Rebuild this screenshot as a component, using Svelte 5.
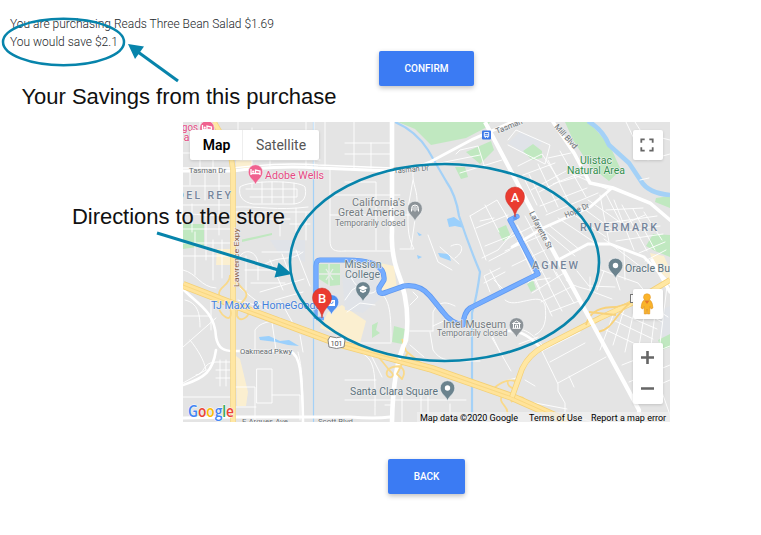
<script>
  // Minor streets, drawn as thin white lines.
  const streets = [
    // north-west
    'M183 140H232M183 153H228M200 122V168M213 140V168M183 186H230M190 170V185M205 170V200M219 171V235M183 205H230M183 215C195 212 205 218 230 214M183 229H230M192 204V232M206 214V260M183 243H232M183 256H231M195 232V275M213 240V280M222 240V278',
    'M240 187C247 180 300 180 305 187C308 200 300 204 292 204H253C243 202 238 197 240 187M246 189H297V197H250M252 183V188M262 182V203M272 182V203M283 182V203M294 183V204',
    'M235 212H310M235 207C260 206 276 211 308 207M314 122V165M299 170V178M330 170V215H420M330 195H400M345 182H376V224M354 122V168M371 143V168M345 143H391M306 122V168',
    'M238 122V160M252 128V166M270 160V166M240 160H320M325 122V166M240 219H290M262 212V222M280 212V236M296 208V236M306 212V240M290 224H310M330 215V240C330 250 334 252 345 251',
    // west, around the expressway
    'M240 256C245 248 258 251 258 265V280M246 256V290M262 252H300M265 264C280 255 290 262 303 252M270 260L283 290M282 254L296 291M296 250L310 286M245 270H273M251 283H285M260 292L304 279M275 300L303 292M240 288L268 310M238 300L258 306',
    'M183 270C197 273 200 287 216 288M185 300C198 303 200 314 200 327M183 316H210M190 340C198 350 204 360 206 370M196 375C205 375 202 362 216 362H232M183 397H232M220 360V386M226 360V386M216 370H232M216 378H232M211 300V330M183 347L216 318M183 383L206 370',
    'M257 369H272V403H257ZM235 387H255V420M235 407H256M272 395H300V420M298 352C300 361 303 368 303 418M255 351V330C261 321 270 323 280 318M272 322L276 350M300 335L303 352M280 300L295 327',
    // centre
    'M345 251H393M376 224V250M400 249H414C407 236 408 225 408 208L413 180M345 154H392M413 172C412 185 418 190 417 205L411 248M428 235L438 262L452 270M440 247L459 264M451 246C463 240 466 251 455 258M456 154L460 150L478 146L485 168M460 173L502 160M430 165L480 155',
    'M470 216L497 200L515 230L498 250L482 258M470 216L486 260M485 205L499 232M476 228L508 215M489 261L510 250M485 246L510 236M490 270L502 292M494 218L480 221',
    'M380 292C390 300 391 313 391 342M391 343H353M410 331H433M410 345L424 357M430 332L433 350C440 361 449 359 450 361H480M433 331V312C439 300 447 302 455 306M410 305L418 297L413 292M492 338L511 371M450 318L433 326M470 327H488L500 352M357 351C377 358 375 372 375 415M345 380H376M345 400H466M402 397V422M428 397V422M450 404V422M369 351L382 377M421 390V420M385 405H392',
    'M484 283L505 272M490 292L484 276L500 268M494 280L504 290M345 300L352 290L362 284M350 275C356 290 372 300 378 288M347 312L360 303L375 305',
    // north-east
    'M508 140L516 130L550 145L545 164L508 145M518 166L542 154L560 181L539 192M523 175L555 163M531 190L566 171M523 176L537 205M529 174L547 212M538 164L558 207M548 160L569 202M560 151L586 197M540 206L587 188M546 215L598 193M553 184L583 172M570 173L609 190M548 158L571 153M560 182L600 170',
    'M505 240L535 225M505 251L540 236M512 266L545 250M528 283L550 263M517 225L550 286M525 216L558 278M505 213L540 289M544 230L575 256M550 226L580 250M558 218L597 244M570 212L606 237M580 206L613 230M588 200L624 225',
    'M600 195L609 242M606 194L622 225L645 215M614 200L634 250M622 205L647 251M633 209L655 250M644 212L662 240M606 210L643 208M607 223L657 216M608 232L660 226M616 241L663 234M604 239L645 270M639 253L665 242M645 261L666 250M624 250L625 280',
    'M635 122L642 133L670 140M626 122L637 145M648 160L670 154M640 180L649 178',
    // south-east
    'M524 282L550 278M532 293L564 273M541 302L571 287M550 312L579 301M535 281L552 316M545 278L562 311M556 272L574 303M505 300C515 310 540 290 545 305C547 320 545 330 535 335M512 333C520 325 530 331 542 345M519 344L538 337',
    'M566 280C575 289 590 288 596 293L612 299M577 271L589 286L615 287M590 277V290M604 271L597 290M601 270L638 283L651 299M610 260L620 290',
    'M604 329L648 350M613 320L653 339M620 313L657 329M632 305L662 322M642 300L668 317M615 310L600 350M626 303L613 345M637 297L625 352M648 293L637 358M658 290L649 362M667 286L658 360M622 365L670 346M629 382L670 365M635 395L670 380M650 358L670 415',
    'M542 351L558 384V391L565 403V422M542 351L580 332M550 362L585 343M558 383L606 357M569 376L574 387M505 381L520 377M525 380L535 386M530 402L567 409M568 413L592 422',
  ];

  const places = [
    { t: "California's", x: 352, y: 206, w: 53, s: 10.7, c: '#747b80' },
    { t: 'Great America', x: 338, y: 216, w: 67, s: 10.7, c: '#747b80' },
    { t: 'Temporarily closed', x: 335, y: 225.5, w: 70.5, s: 8.6, c: '#747b80' },
    { t: 'Mission', x: 344.5, y: 267.5, w: 37, s: 10.7, c: '#647984' },
    { t: 'College', x: 345, y: 278, w: 35, s: 10.7, c: '#647984' },
    { t: 'Intel Museum', x: 443, y: 328, w: 63, s: 10.7, c: '#747b80' },
    { t: 'Temporarily closed', x: 437, y: 336, w: 70.5, s: 8.6, c: '#747b80' },
    { t: 'Santa Clara Square', x: 350, y: 395, w: 88, s: 10.7, c: '#5b717c' },
    { t: 'Oracle Bu', x: 625, y: 272, w: 45, s: 10.7, c: '#5b717c' },
    { t: 'Adobe Wells', x: 265, y: 179, w: 59, s: 11, c: '#e54983' },
    { t: 'gos', x: 182, y: 130.5, w: 16, s: 10.5, c: '#e54983' },
    { t: 'a', x: 183.5, y: 140.5, w: 6, s: 10.5, c: '#e54983' },
    { t: 'TJ Maxx & HomeGoods', x: 211, y: 309, w: 110, s: 11, c: '#427fdc' },
    { t: 'Ulistac', x: 580, y: 163.5, w: 32, s: 10.7, c: '#31904d' },
    { t: 'Natural Area', x: 567, y: 174, w: 58, s: 10.7, c: '#31904d' },
    { t: 'DEL REY', x: 177, y: 198.5, w: 54, s: 10.5, c: '#75859b' },
    { t: 'RIVERMARK', x: 580, y: 231, w: 77, s: 10.8, c: '#75859b' },
    { t: 'AGNEW', x: 532, y: 269, w: 46, s: 10.8, c: '#75859b' },
  ];

  const roadNames = [
    { t: 'Tasman Dr', x: 189, y: 173, w: 37, r: 0 },
    { t: 'Tasman Dr', x: 394, y: 173.5, w: 35, r: -5 },
    { t: 'Tasman', x: 497, y: 134, w: 28, r: -22 },
    { t: 'Mill Blvd', x: 554, y: 127, w: 30, r: 48 },
    { t: 'Hope Dr', x: 566, y: 218, w: 26, r: -24 },
    { t: 'Lafayette St', x: 529, y: 213, w: 41, r: 63 },
    { t: 'Lawrence Expy', x: 238.5, y: 287, w: 59, r: -90, c: '#8a5a3c' },
    { t: 'Oakmead Pkwy', x: 240, y: 354, w: 52, r: 0 },
    { t: 'E Arques Ave', x: 242, y: 424, w: 46, r: 0 },
    { t: 'Scott Blvd', x: 318, y: 424, w: 35, r: 0 },
  ];

  const pins = [
    { x: 415, y: 221.5, c: '#8c9398', kind: 'park' },
    { x: 363, y: 302, c: '#6b838e', kind: 'school' },
    { x: 516.5, y: 338, c: '#8c9398', kind: 'museum' },
    { x: 447.5, y: 401, c: '#6b838e', kind: 'dot' },
    { x: 615.5, y: 278.5, c: '#6b838e', kind: 'dot' },
    { x: 255.5, y: 185, c: '#f0628f', kind: 'bed' },
    { x: 207, y: 141, c: '#f0628f', kind: 'bed' },
    { x: 331.5, y: 315, c: '#4f8ff0', kind: 'bag' },
  ];

  const route = 'M517 216.5L510 220L538 274L470 308Q464 312 463 325Q451 323 443 312L430 296Q420 284 404 286L387 292Q378 296 379 288L384 280Q385 269 374 264Q364 260 345 260H320Q316 260 316 266V298';

  const google = [
    ['G', '#4285f4'], ['o', '#ea4335'], ['o', '#fbbc04'],
    ['g', '#4285f4'], ['l', '#34a853'], ['e', '#ea4335'],
  ];
</script>

<main>
  <div class="summary">
    <p>You are purchasing Reads Three Bean Salad $1.69</p>
    <p>You would save $2.1</p>
  </div>

  <button class="confirm">CONFIRM</button>

  <div class="map">
    <svg class="tiles" viewBox="183 122 487 300" width="487" height="300">
      <rect x="183" y="122" width="487" height="300" fill="#e4e4e4" />

      <g fill="#fbefd0">
        <path d="M216 265H232V249H217ZM236 160H252V168H236ZM236 356L240 359L248 392L246 406H237ZM328 312L342 305L366 321L360 343L320 328ZM380 263L394 266L397 289L382 294ZM650 253L664 256L670 270V280L655 269Z" />
      </g>
      <g fill="#e0e3e8">
        <path d="M270 240H305V262L278 252ZM342 275L375 270L380 299L363 313L345 310ZM508 143L520 132L542 142L532 158ZM661 310L670 306V345L660 335Z" />
      </g>
      <g fill="#c0e8c0">
        <path d="M398 122H490L487 127L466 138L431 145L415 129ZM466 152L491 141L494 150L480 164ZM455 167L465 167L468 177L461 179ZM565 122H589L610 146L621 170L609 181L590 166L573 140ZM523 151L533 144L542 151V158L532 160ZM656 198L670 196V208L655 202ZM646 246L653 234L670 235V257L655 251ZM183 224H204V246L183 249ZM319 264H340V285L330 286L319 279ZM394 326L405 329L402 344L392 342ZM372 325L378 322L376 330L380 333L372 338ZM527 284L533 280L536 289L531 292ZM658 340L670 334V347L662 350ZM497 229L506 225L511 237L503 241Z" />
        <path d="M242 239.500L272 233V235L242 242Z" />
      </g>
      <path d="M319 274H340M329 264V286M326 269L333 280M333 269L326 280" fill="none" stroke="#e8ede8" stroke-width="1.300" />
      <g fill="#9bd0fc">
        <path d="M447 219L454 217L461 222L464 228L455 226L449 227ZM417 232L422 235L419 236ZM438 253L449 254L451 261L440 257ZM417 255L422 257L418 259ZM259 337L269 336L280 341L289 340L299 346L288 345L276 342L260 340Z" />
      </g>
      <g fill="none" stroke="#a4d1f7">
        <path d="M395 122Q416 131 428 150L446 181Q456 195 459 216Q469 246 480 272Q477 296 472 313V422" stroke-width="2.2" />
        <path d="M588 121Q603 130 609 145L629 163L641 181Q648 193 670 195" stroke-width="4.600" />
        <path d="M313.500 122V422" stroke-width="1.2" />
      </g>

      <g fill="none" stroke="#fff" stroke-linecap="round">
        {#each streets as d}
          <path {d} stroke-width="1" stroke-opacity=".9" />
        {/each}
        <path d="M183 171H233Q282 165 318 168L392 171Q412 170 430 162L473 139L512 122" stroke-width="3" />
        <path d="M183 168H233Q282 162 318 165L392 168" stroke-width="1.3" />
        <path d="M392 122V232Q391 252 397 270Q411 304 406 340Q393 367 392 422" stroke-width="4.6" />
        <path d="M553 122L574 153L590 183L613 188L650 203L670 220" stroke-width="3.600" />
        <path d="M612 188L590 207L543 228L512 247M558 260L588 244L610 244L644 257L670 284" stroke-width="2.800" />
        <path d="M183 289C196 303 215 311 216 337C218 349 225 351 233 351H290C300 355 302 370 303 422M216 350C213 371 205 378 183 385" stroke-width="2.600" />
        <path d="M183 418L232 417L350 417Q375 419 390 417M505 331Q526 329 542 350" stroke-width="2.800" />
        <path d="M652 260L670 292" stroke-width="3.5" />
      </g>

      <g fill="none" stroke-linejoin="round">
        <path d="M214 122L230 150L233 170V422" stroke="#f5d684" stroke-width="5.600" />
        <path d="M214 122L230 150L233 170V422" stroke="#ffe7a3" stroke-width="4" />
        <g stroke="#f9d98a" stroke-width="1.800">
          <path d="M230 275C230 286 219 286 219 294C220 303 230 300 231 313C231 323 222 316 219 309M236 278C238 289 249 290 246 297C242 305 236 304 237 316C240 322 247 319 250 311" />
          <path d="M377 355L390 371C397 376 389 380 387 375C385 368 394 366 402 366M402 339L406 351L423 365M408 352L397 374L402 379C407 370 401 366 398 367" />
          <path d="M493 389C505 378 518 378 517 386C516 392 506 386 508 381M511 402C516 397 525 393 527 406M503 393C496 405 510 405 507 414" />
        </g>
        <path d="M183 285L240 307L340 344L432 369L512 397L566 421" stroke="#f4d075" stroke-width="8" />
        <path d="M183 285L240 307L340 344L432 369L512 397L566 421" stroke="#ffe39a" stroke-width="6.400" />
        <path d="M183 285L240 307L340 344L432 369L512 397L566 421" stroke="#f6d37a" stroke-width=".8" />
        <path d="M512 397L522 369Q529 354 545 346L600 318L630 304L670 280" stroke="#f4d075" stroke-width="5.600" />
        <path d="M512 397L522 369Q529 354 545 346L600 318L630 304L670 280" stroke="#ffe7a3" stroke-width="4.2" />
        <path d="M586 325C590 310 602 307 616 307L630 303C614 316 613 329 598 332M589 312L616 315" stroke="#f8d27a" stroke-width="1.800" />
      </g>
      <path d="M485 122L558 260L639 410V422" stroke="#fff" stroke-width="4.200" fill="none" />
      <path d="M406 337Q404 349 399 359" stroke="#fff" stroke-width="3.600" fill="none" />

      <g class="roads">
        {#each roadNames as n}
          <text x={n.x} y={n.y} fill={n.c ?? '#666c70'} textLength={n.w} lengthAdjust="spacingAndGlyphs" transform="rotate({n.r} {n.x} {n.y})">{n.t}</text>
        {/each}
      </g>

      <path d={route} fill="none" stroke="#5f98f0" stroke-width="5.200" stroke-linejoin="round" stroke-linecap="round" />
      <path d={route} fill="none" stroke="#75adff" stroke-width="3.800" stroke-linejoin="round" stroke-linecap="round" />
      <path d="M316 298V319M316 318.500H324" fill="none" stroke="#73a9f5" stroke-width="3.600" />
      <circle cx="515" cy="218" r="2" fill="#5f98f0" />

      <g class="places">
        {#each places as p}
          <text x={p.x} y={p.y} font-size={p.s} fill={p.c} textLength={p.w} lengthAdjust={p.c === '#75859b' ? 'spacing' : 'spacingAndGlyphs'} class:area={p.c === '#75859b'}>{p.t}</text>
        {/each}
      </g>

      {#each pins as p}
        <g transform="translate({p.x} {p.y})">
          <path d="M0 0C-1-5-7.300-7-7.300-13A7.300 7.300 0 0 1 7.300-13C7.300-7 1-5 0 0Z" fill={p.c} stroke="#f2f4f5" stroke-width=".6" />
          {#if p.kind === 'dot'}
            <circle cy="-13" r="2.7" fill="#fff" />
          {:else if p.kind === 'school'}
            <path d="M-4.8-14L0-16.5L4.8-14L0-11.5ZM-3-12.4L0-10.8L3-12.4V-10.4L0-9L-3-10.4Z" fill="#fff" />
          {:else if p.kind === 'museum'}
            <path d="M-4-14.5L0-17L4-14.5ZM-3-14V-10M3-14V-10M-4-9.7H4M-1-10V-13H1V-10" fill="none" stroke="#fff" />
          {:else if p.kind === 'park'}
            <path d="M-3.5-10V-13A3.5 3.5 0 0 1 3.5-13V-10M0-16V-10M-2-15V-11M2-15V-11" fill="none" stroke="#fff" />
          {:else if p.kind === 'bed'}
            <path d="M-4.5-16V-10M-4.5-11.5H4.5V-10M4.5-12V-14L0-15V-12" fill="none" stroke="#fff" stroke-width="1.3" /><circle cx="-2.3" cy="-13.4" r="1.1" fill="#fff" />
          {:else}
            <path d="M-3.500-15H3.500V-9H-3.500Z" fill="#fff" /><path d="M-1.600-13.500A1.600 2 0 0 0 1.600-13.500" fill="none" stroke="#4f8ff0" />
          {/if}
        </g>
      {/each}

      <g fill="#3b78e7">
        <rect x="482" y="130.500" width="9" height="9" rx="1" />
        <path d="M484.300 132.500H488.700V136.500H484.300ZM484.300 134.800H488.700M485 138L485.600 137M488 138L487.400 137" fill="none" stroke="#fff" stroke-width=".9" />
      </g>
      <g>
        <path d="M330 336.500Q336.500 339 343 336.500L345 340L344 347Q336.500 350 329 347L328 340Z" fill="#fff" stroke="#777" stroke-width=".9" />
        <text x="330.500" y="345.500" font-size="7.500" fill="#555" textLength="12">101</text>
      </g>
      <rect x="630.500" y="294.500" width="6" height="8" fill="#fff" stroke="#777" />

      {#each [['A', 515, 217], ['B', 322, 318]] as [name, x, y]}
        <g transform="translate({x} {y})">
          <path d="M0 0C-1-10-9.500-12-9.500-20.500A9.500 9.500 0 0 1 9.500-20.500C9.500-12 1-10 0 0Z" fill="#ea3b30" stroke="#c5352c" stroke-width=".5" />
          <text y="-15.500" class="marker">{name}</text>
        </g>
      {/each}
    </svg>

    <div class="types"><b>Map</b><span>Satellite</span></div>
    <div class="tool full">
      <svg viewBox="0 0 14 14" width="14" height="14"><path d="M1.300 4.700V1.300H4.700M9.300 1.300H12.700V4.700M12.700 9.300V12.700H9.300M4.700 12.700H1.300V9.300" fill="none" stroke="#666" stroke-width="1.800" /></svg>
    </div>
    <div class="tool man">
      <svg viewBox="0 0 14 22" width="14" height="22">
        <path d="M3.500 7.500H10.500Q12.500 9 13 15L11 16L10 13.500L9.700 21H7.400L7 16L6.600 21H4.300L4 13.500L3 16L1 15Q1.500 9 3.500 7.500Z" fill="#f9b32a" stroke="#d98a1c" stroke-width=".5" />
        <path d="M4.500 7.500H9.500L7 11Z" fill="#e5762b" />
        <circle cx="7" cy="4.200" r="3.500" fill="#fbb42b" stroke="#e09524" stroke-width=".5" />
      </svg>
    </div>
    <div class="tool zoomer">
      <svg viewBox="0 0 30 61" width="30" height="61"><path d="M8 14.500H21M14.500 8V21M8 45.500H21" fill="none" stroke="#666" stroke-width="2.600" /></svg>
    </div>
    <svg class="google" viewBox="0 0 50 20" width="50" height="20">
      <text x="1" y="14" textLength="46" lengthAdjust="spacingAndGlyphs">{#each google as [ch, fill]}<tspan {fill}>{ch}</tspan>{/each}</text>
    </svg>
    <div class="legal"><span class="data">Map data ©2020 Google</span><span class="terms">Terms of Use</span><span class="report">Report a map error</span></div>
  </div>

  <button class="back">BACK</button>

  <svg class="notes" viewBox="0 0 761 535" width="761" height="535">
    <g fill="none" stroke="#0784ab">
      <ellipse cx="63.500" cy="42" rx="60.500" ry="23.200" stroke-width="2.500" />
      <ellipse cx="444.500" cy="262.500" rx="154.500" ry="98.500" stroke-width="2.600" />
      <path d="M178 81L138 52" stroke-width="3" />
      <path d="M157 233L280 270.500" stroke-width="3" />
    </g>
    <g fill="#0784ab">
      <path d="M128 44L144 46.500L135 59Z" />
      <path d="M292 274L278.500 262.500L274.500 277.500Z" />
    </g>
    <text x="21.500" y="104" textLength="315">Your Savings from this purchase</text>
    <text x="72" y="224" textLength="213">Directions to the store</text>
  </svg>
</main>

<style>
  :global(body) { background: #fff; }
  main {
    position: relative;
    box-sizing: border-box;
    width: 761px;
    height: 535px;
    overflow: hidden;
    padding-top: 15px;
    display: flex;
    flex-direction: column;
    font-family: Roboto, sans-serif;
    color: #212529;
  }
  .summary { padding-left: 10px; height: 36px; }
  p { margin: 0; font-size: 12px; font-weight: 300; line-height: 18px; }
  button {
    border: 0;
    padding: 0;
    height: 35px;
    border-radius: 2px;
    background: #3b7bf3;
    color: #fff;
    font: 500 10px Roboto, sans-serif;
    box-shadow: 0 2px 5px rgba(0, 0, 0, 0.25);
  }
  .confirm { width: 95px; margin-left: 379px; }
  .back { width: 77px; margin: 37px 0 0 388px; }
  .map { position: relative; width: 487px; height: 300px; margin: 36px 0 0 183px; }
  .tiles { display: block; }
  .tiles text { font-family: Roboto, sans-serif; }
  .places text { stroke: #f1f1f1; stroke-width: 1.2px; paint-order: stroke; stroke-linejoin: round; font-weight: 400; }
  .places .area { font-weight: 500; }
  .roads text { font-size: 8px; stroke: #f1f1f1; stroke-width: 1px; paint-order: stroke; }
  .tiles .marker { fill: #fff; font-size: 13px; font-weight: 500; text-anchor: middle; }
  .types {
    position: absolute;
    left: 7px;
    top: 8px;
    display: flex;
    height: 30px;
    width: 129px;
    line-height: 30px;
    font-size: 14px;
    background: #fff;
    border-radius: 2px;
    box-shadow: 0 1px 3px rgba(0, 0, 0, 0.15);
    color: #565656;
    text-align: center;
  }
  .types b { width: 53px; font-weight: 600; color: #000; border-right: 1px solid #eee; box-sizing: border-box; padding-left: 1px; }
  .types span { width: 76px; }
  .tool {
    position: absolute;
    left: 450px;
    width: 30px;
    height: 30px;
    display: flex;
    align-items: center;
    justify-content: center;
    background: #fff;
    border-radius: 2px;
    box-shadow: 0 1px 3px rgba(0, 0, 0, 0.15);
  }
  .full { top: 8px; }
  .full svg, .man svg { position: relative; left: -1px; }
  .man { top: 167px; }
  .zoomer { top: 221px; height: 61px; }
  .google { position: absolute; left: 4px; top: 281px; }
  .google text { font: 600 16px "Open Sans", sans-serif; stroke: #fff; stroke-width: 1px; paint-order: stroke; }
  .legal {
    position: absolute;
    right: 0;
    bottom: 0;
    display: flex;
    width: 253px;
    height: 10px;
    line-height: 12px;
    font-size: 9px;
    white-space: nowrap;
    color: #000;
    background: rgba(240, 240, 240, 0.75);
  }
  .data { width: 108px; padding-left: 3px; box-sizing: border-box; }
  .terms { width: 62px; padding-left: 4px; box-sizing: border-box; }
  .report { padding-left: 4px; }
  .notes { position: absolute; inset: 0; pointer-events: none; }
  .notes text { font: 22px "Liberation Sans", Arial, sans-serif; fill: #111; }
</style>
